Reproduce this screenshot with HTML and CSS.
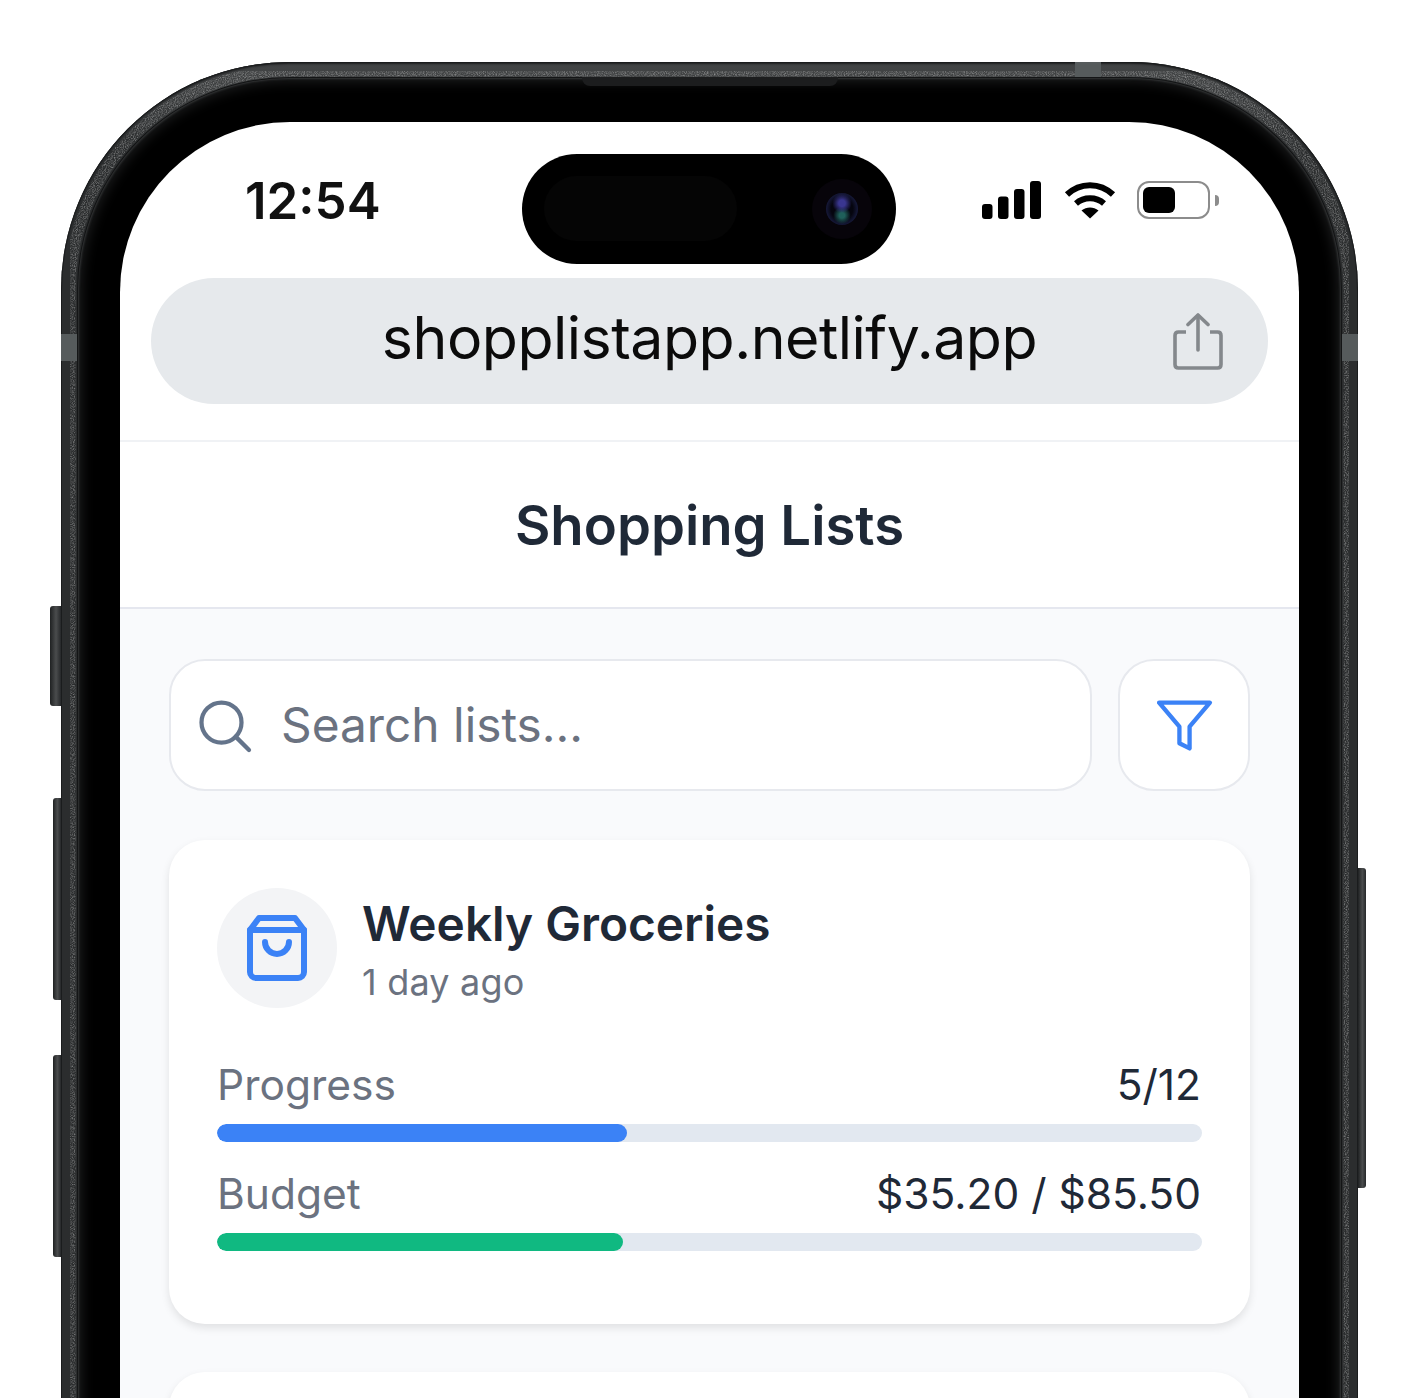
FILE: index.html
```html
<!DOCTYPE html>
<html lang="en">
<head>
  <meta charset="UTF-8" />
  <meta name="viewport" content="width=device-width, initial-scale=1" />
  <title>Shopping Lists</title>
  <link rel="stylesheet" href="styles.css">
</head>
<body>
  <div class="phone">
    <span class="side-btn action"></span>
    <span class="side-btn vol-up"></span>
    <span class="side-btn vol-down"></span>
    <span class="side-btn power"></span>

    <svg class="grain" width="1297" height="1700" aria-hidden="true">
      <defs>
        <filter id="grainFilter" x="0" y="0" width="100%" height="100%">
          <feTurbulence type="fractalNoise" baseFrequency="0.9" numOctaves="2" seed="4" result="noise" />
          <feColorMatrix in="noise" type="matrix" values="0 0 0 0 1  0 0 0 0 1  0 0 0 0 1  1.8 0 0 0 -0.68" result="specks" />
          <feComposite in="specks" in2="SourceAlpha" operator="in" />
        </filter>
      </defs>
      <rect x="9" y="9" width="1279" height="1682" rx="218" fill="none" stroke="#000" stroke-width="11" filter="url(#grainFilter)" />
    </svg>

    <span class="antenna top"></span>
    <span class="antenna left"></span>
    <span class="antenna right"></span>

    <div class="bezel">
      <span class="speaker"></span>
      <div class="screen">
        <div class="island">
          <span class="island-sensor"></span>
          <span class="island-camera"><span class="lens"></span></span>
        </div>

        <div class="status-bar">
          <span class="time">12:54</span>
          <div class="status-icons">
            <svg class="signal" width="60" height="38" viewBox="0 0 60 38" fill="#000">
              <rect x="0" y="23" width="10.5" height="15" rx="3" />
              <rect x="16" y="15.500" width="10.500" height="22.500" rx="3" />
              <rect x="32" y="8" width="10.500" height="30" rx="3" />
              <rect x="48" y="0" width="11" height="38" rx="3" />
            </svg>
            <svg class="wifi" width="52" height="38" viewBox="0 0 52 38" fill="none" stroke="#000" stroke-width="6">
              <path d="M3 13.500C16 1 36 1 49 13.500" />
              <path d="M12 22.500C20 15.500 32 15.500 40 22.500" />
              <path d="M26 37.500L17.500 29.500C22.500 25.500 29.500 25.500 34.500 29.500Z" fill="#000" stroke="none" />
            </svg>
            <div class="battery">
              <div class="battery-body"><span class="battery-level"></span></div>
              <span class="battery-nub"></span>
            </div>
          </div>
        </div>

        <div class="url-wrap">
          <div class="url-bar">
            <span class="url-text">shopplistapp.netlify.app</span>
            <svg class="share-icon" width="50" height="58" viewBox="0 0 50 58" fill="none" stroke="#84888c" stroke-width="3.600">
              <path d="M13 19H5.500Q2 19 2 22.500V51.500Q2 55 5.500 55H44.500Q48 55 48 51.500V22.500Q48 19 44.500 19H37" />
              <path d="M25 37V3" stroke-linecap="round" />
              <path d="M15 11.500L25 2L35 11.500" stroke-linecap="round" stroke-linejoin="round" />
            </svg>
          </div>
        </div>

        <header class="app-header">
          <h1>Shopping Lists</h1>
        </header>

        <main class="content">
          <div class="search-row">
            <div class="search-box">
              <svg class="search-icon" width="60" height="60" viewBox="0 0 24 24" fill="none" stroke="#64748b" stroke-width="1.700" stroke-linecap="round">
                <circle cx="11" cy="11" r="8" />
                <line x1="22" y1="22" x2="16.650" y2="16.650" />
              </svg>
              <span class="search-placeholder">Search lists...</span>
            </div>
            <button class="filter-btn" type="button" aria-label="Filter">
              <svg width="61" height="61" viewBox="0 0 24 24" fill="none" stroke="#3b82f6" stroke-width="1.700" stroke-linejoin="round">
                <polygon points="22 3 2 3 10 12.460 10 19 14 21 14 12.460 22 3" />
              </svg>
            </button>
          </div>

          <section class="list-card">
            <div class="list-head">
              <div class="list-icon">
                <svg width="72" height="72" viewBox="0 0 24 24" fill="none" stroke="#3b82f6" stroke-width="2" stroke-linecap="round" stroke-linejoin="round">
                  <path d="M6 2 3 6v14a2 2 0 0 0 2 2h14a2 2 0 0 0 2-2V6l-3-4Z" />
                  <path d="M3 6h18" />
                  <path d="M16 10a4 4 0 0 1-8 0" />
                </svg>
              </div>
              <div class="list-text">
                <h2 class="list-title">Weekly Groceries</h2>
                <p class="list-time">1 day ago</p>
              </div>
            </div>

            <div class="stat">
              <div class="stat-row"><span class="stat-label">Progress</span><span class="stat-value">5/12</span></div>
              <div class="bar"><div class="bar-fill blue" style="width: 41.600%"></div></div>
            </div>
            <div class="stat">
              <div class="stat-row"><span class="stat-label">Budget</span><span class="stat-value">$35.20 / $85.50</span></div>
              <div class="bar"><div class="bar-fill green" style="width: 41.200%"></div></div>
            </div>
          </section>

          <section class="list-card next"></section>
        </main>
      </div>
    </div>
  </div>
</body>
</html>
```

FILE: styles.css
```css
html, body {
  margin: 0;
  height: 1398px;
  overflow: hidden;
  background: #fff;
}
body {
  font-family: Inter, 'Liberation Sans', sans-serif;
  color: #1f2937;
  padding: 62px 0 0 61px;
  box-sizing: border-box;
}
h1, h2, p {
  margin: 0;
}

/* phone frame */
.phone {
  position: relative;
  width: 1297px;
  height: 1700px;
  box-sizing: border-box;
  padding: 16px 17px 17px;
  border-radius: 228px;
  background: linear-gradient(to bottom, #434546 0, #2b2d2e 90px);
  box-shadow: inset 0 0 0 1px #1a1c1d, inset 0 3px 2px -1px #1e1f20;
}
.grain {
  position: absolute;
  left: 0;
  top: 0;
  pointer-events: none;
  opacity: 0.42;
}
.bezel {
  position: relative;
  height: 100%;
  box-sizing: border-box;
  padding: 44px 42px 0;
  border-radius: 211px;
  background: #000;
  box-shadow: 0 0 0 1px #141516, inset 0 0 2px 1px #333536, inset 0 0 13px 3px #1f2021;
}
.speaker {
  position: absolute;
  left: 504px;
  top: -1px;
  width: 256px;
  height: 9px;
  background: #1c1d1e;
  border-radius: 0 0 8px 8px;
}
.side-btn {
  position: absolute;
  width: 8px;
  background: linear-gradient(to right, #1f2122, #4a4c4d 55%, #26282a);
  border-radius: 3px 0 0 3px;
}
.action { left: -11px; width: 11px; top: 544px; height: 100px; }
.vol-up { left: -8px; top: 736px; height: 202px; }
.vol-down { left: -8px; top: 993px; height: 202px; }
.power {
  right: -8px;
  top: 806px;
  height: 320px;
  border-radius: 0 3px 3px 0;
}
.antenna {
  position: absolute;
  background: #565b5c;
}
.antenna.top { left: 1014px; top: 0; width: 26px; height: 16px; }
.antenna.left { left: 0; top: 272px; width: 17px; height: 27px; }
.antenna.right { right: 0; top: 272px; width: 17px; height: 27px; }

.screen {
  position: relative;
  height: 100%;
  overflow: hidden;
  background: #fff;
  border-radius: 170px 170px 0 0;
}
.island {
  position: absolute;
  left: 402px;
  top: 32px;
  width: 374px;
  height: 110px;
  border-radius: 55px;
  background: #000;
}
.island-sensor {
  position: absolute;
  left: 22px;
  top: 22px;
  width: 193px;
  height: 65px;
  border-radius: 33px;
  background: #050505;
}
.island-camera {
  position: absolute;
  left: 290px;
  top: 25px;
  width: 60px;
  height: 60px;
  border-radius: 50%;
  background: #07040a;
  display: flex;
  align-items: center;
  justify-content: center;
}
.lens {
  width: 32px;
  height: 32px;
  border-radius: 50%;
  background: radial-gradient(circle at 50% 32%, #3a3690 0 12%, transparent 36%),
    radial-gradient(circle at 50% 70%, #1f5f5a 0 10%, transparent 32%),
    radial-gradient(circle, #05050f 0 48%, #171a3c 72%, #10122a 100%);
}

/* status bar */
.status-bar {
  height: 156px;
  box-sizing: border-box;
  padding: 44px 80px 0 125px;
  display: flex;
  justify-content: space-between;
  align-items: flex-start;
}
.time {
  font-size: 51px;
  line-height: 70px;
  font-weight: 600;
  color: #111;
}
.status-icons {
  display: flex;
  align-items: flex-start;
  gap: 21.500px;
  padding-top: 15px;
}
.battery {
  display: flex;
  align-items: center;
  gap: 5px;
}
.battery-body {
  width: 73px;
  height: 38px;
  box-sizing: border-box;
  padding: 4px;
  border: 2px solid #8c8c8c;
  border-radius: 12px;
}
.battery-level {
  display: block;
  width: 32px;
  height: 100%;
  background: #000;
  border-radius: 6px;
}
.battery-nub {
  width: 4px;
  height: 11px;
  background: #8c8c8c;
  border-radius: 0 4px 4px 0;
}

/* address bar */
.url-wrap {
  padding: 0 31px 36px;
  border-bottom: 2px solid #f0f2f5;
}
.url-bar {
  position: relative;
  height: 126px;
  box-sizing: border-box;
  padding-bottom: 7px;
  border-radius: 63px;
  background: #e6e9ec;
  display: flex;
  align-items: center;
  justify-content: center;
}
.url-text {
  font-size: 59px;
  letter-spacing: -0.5px;
  color: #0b0b0b;
}
.share-icon {
  position: absolute;
  right: 45px;
  top: 35px;
}

.app-header {
  height: 165px;
  border-bottom: 2px solid #e5e7ef;
  display: flex;
  align-items: center;
  justify-content: center;
}
.app-header h1 {
  font-size: 54.500px;
  font-weight: 600;
  color: #1f2937;
}

/* list content */
.content {
  background: #f9fafc;
  padding: 50px 49px 0;
  min-height: 900px;
}
.search-row {
  display: flex;
  gap: 26px;
  height: 132px;
  margin-bottom: 49px;
}
.search-box {
  flex: 1;
  box-sizing: border-box;
  display: flex;
  align-items: center;
  gap: 27px;
  padding-left: 23px;
  background: #fff;
  border: 2px solid #e7e9ee;
  border-radius: 36px;
}
.search-placeholder {
  font-size: 47.800px;
  color: #6b7280;
}
.filter-btn {
  width: 132px;
  padding: 0;
  background: #fff;
  border: 2px solid #e7e9ee;
  border-radius: 36px;
  display: flex;
  align-items: center;
  justify-content: center;
}
.list-card {
  height: 484px;
  box-sizing: border-box;
  padding: 48px 48px 0;
  background: #fff;
  border-radius: 36px;
  box-shadow: 0 4px 9px rgba(0, 0, 0, 0.1);
}
.list-card.next {
  margin-top: 48px;
}
.list-head {
  display: flex;
  align-items: flex-start;
  gap: 26px;
  margin-bottom: 47px;
}
.list-icon {
  width: 120px;
  height: 120px;
  border-radius: 50%;
  background: #f3f4f6;
  display: flex;
  align-items: center;
  justify-content: center;
}
.list-text {
  padding-top: 6px;
  margin-left: -1px;
}
.list-title {
  font-size: 47.800px;
  line-height: 60px;
  font-weight: 600;
  color: #1f2937;
}
.list-time {
  margin-top: 2px;
  font-size: 36px;
  line-height: 52px;
  letter-spacing: 0.2px;
  color: #6b7280;
}
.stat {
  margin-bottom: 22px;
}
.stat-row {
  display: flex;
  justify-content: space-between;
  padding: 0 1px 0 0;
  height: 60px;
  line-height: 60px;
  margin-bottom: 9px;
  font-size: 42.500px;
}
.stat-label {
  color: #6b7280;
}
.stat-value {
  color: #1f2937;
}
.bar {
  height: 18px;
  border-radius: 9px;
  background: #e2e8f0;
  overflow: hidden;
}
.bar-fill {
  height: 100%;
  border-radius: 9px;
}
.bar-fill.blue { background: #3b82f6; }
.bar-fill.green { background: #10b981; }
```
